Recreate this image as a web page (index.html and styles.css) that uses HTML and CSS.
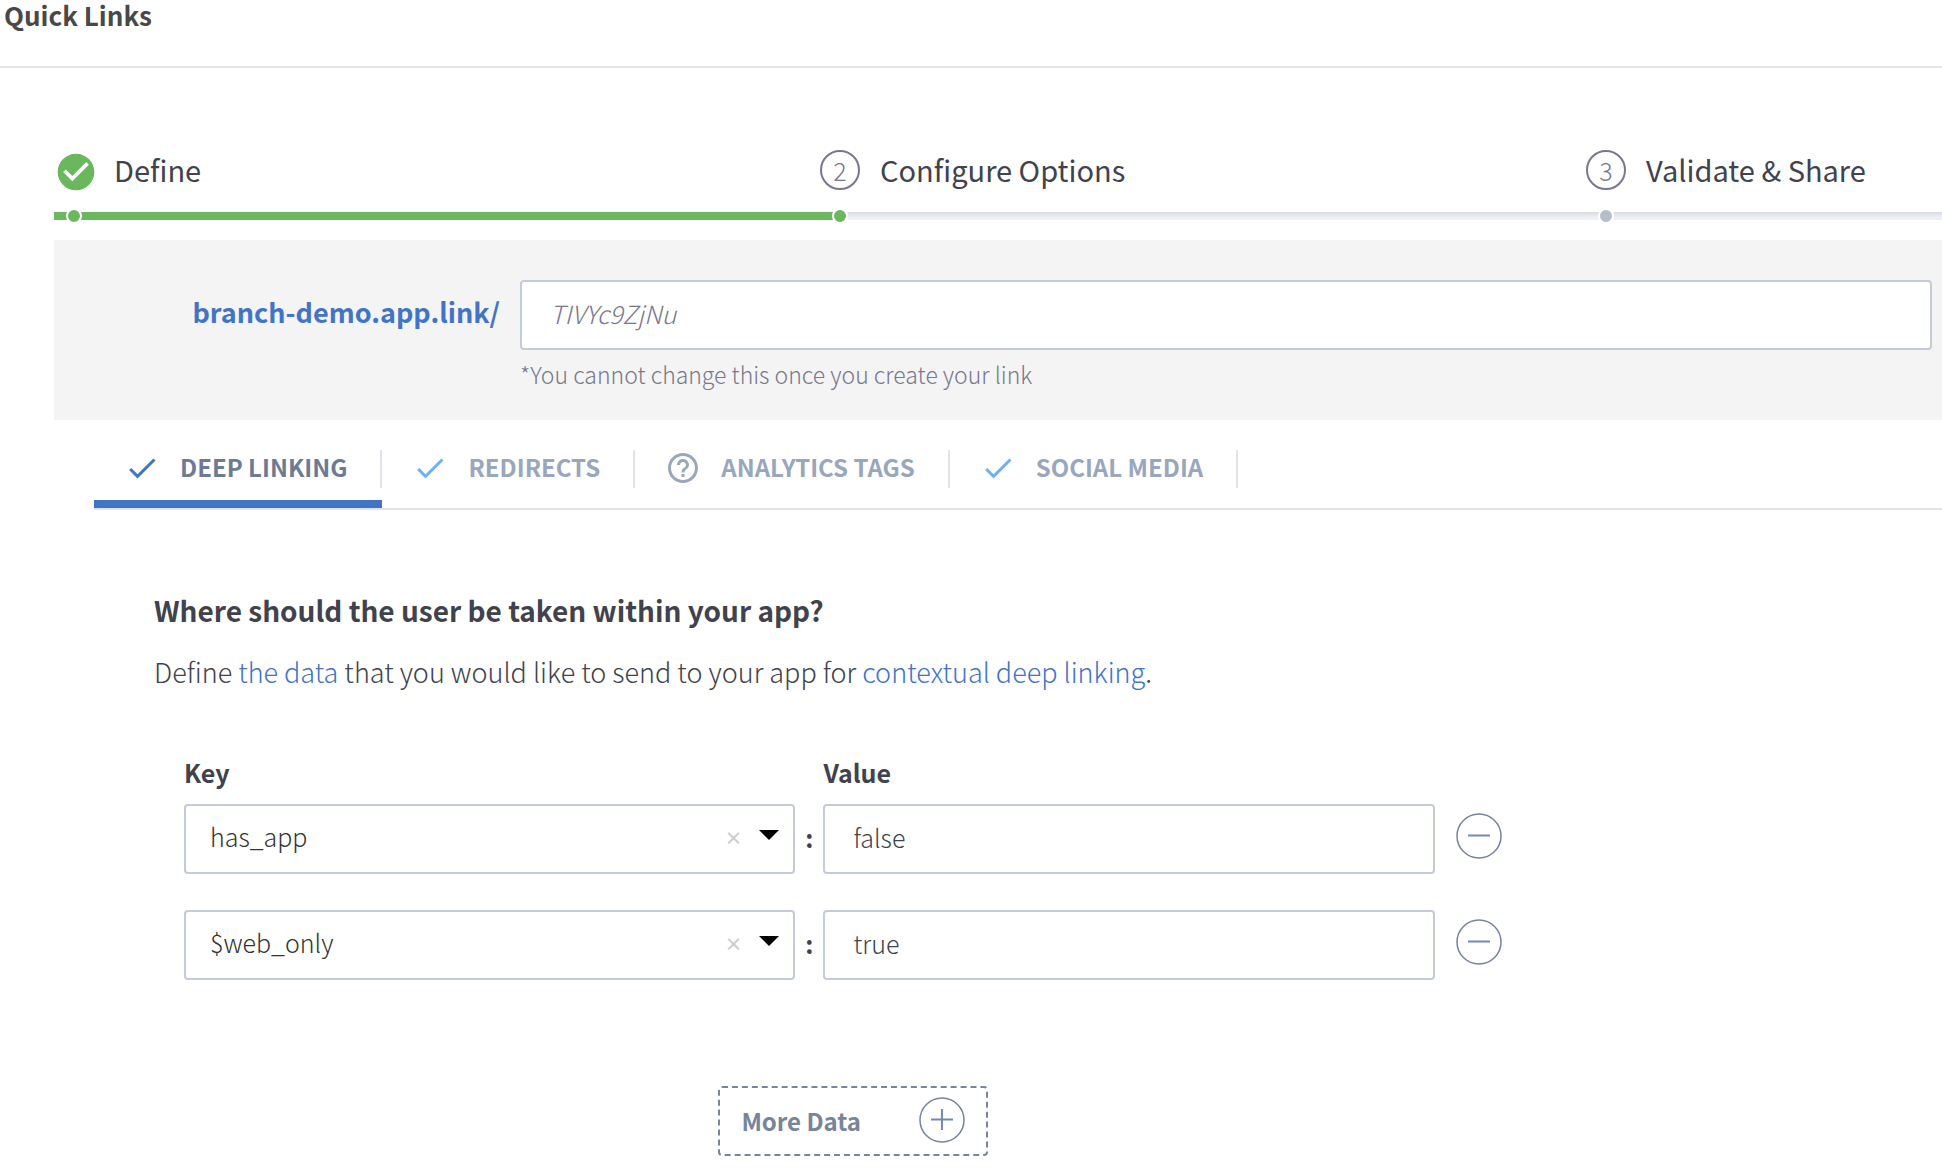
FILE: index.html
```html
<!DOCTYPE html>
<html lang="en">
<head>
  <meta charset="utf-8">
  <meta name="viewport" content="width=device-width, initial-scale=1">
  <title>Quick Links</title>
  <link rel="stylesheet" href="styles.css">
</head>
<body>
  <svg class="sprite" aria-hidden="true">
    <symbol id="check" viewBox="0 0 24 24"><path d="M9 16.17L4.83 12l-1.42 1.41L9 19 21 7l-1.41-1.41z"/></symbol>
    <symbol id="check-circle" viewBox="0 0 24 24"><path d="M12 2C6.48 2 2 6.48 2 12s4.48 10 10 10 10-4.48 10-10S17.52 2 12 2zm-2 15l-5-5 1.41-1.41L10 14.17l7.59-7.59L19 8l-9 9z"/></symbol>
    <symbol id="help" viewBox="0 0 24 24"><path d="M11 18h2v-2h-2v2zm1-16C6.48 2 2 6.48 2 12s4.48 10 10 10 10-4.48 10-10S17.52 2 12 2zm0 18c-4.41 0-8-3.59-8-8s3.59-8 8-8 8 3.59 8 8-3.59 8-8 8zm0-14c-2.21 0-4 1.79-4 4h2c0-1.1.9-2 2-2s2 .9 2 2c0 2-3 1.75-3 5h2c0-2.25 3-2.5 3-5 0-2.21-1.79-4-4-4z"/></symbol>
    <symbol id="minus-round" viewBox="0 0 46 46"><circle cx="23" cy="23" r="22" fill="none" stroke="#77849a" stroke-width="1.5"/><path d="M12 22.5h22" fill="none" stroke="#7188b8" stroke-width="2"/></symbol>
    <symbol id="plus-round" viewBox="0 0 46 46"><circle cx="23" cy="23" r="22" fill="none" stroke="#77849a" stroke-width="1.5"/><path d="M12 22.5h22M23 12v21" fill="none" stroke="#7188b8" stroke-width="2"/></symbol>
    <symbol id="caret" viewBox="0 0 20 10"><path d="M0 0h20L10 10z"/></symbol>
  </svg>

  <header class="page-header">
    <h1 class="page-title">Quick Links</h1>
  </header>

  <main class="page">
    <ol class="steps">
      <li class="step step-done">
        <div class="step-head"><svg class="step-check"><use href="#check-circle"/></svg><span>Define</span></div>
        <div class="step-track"><span class="step-dot"></span></div>
      </li>
      <li class="step step-current">
        <div class="step-head"><span class="step-number">2</span><span>Configure Options</span></div>
        <div class="step-track"><span class="step-dot"></span></div>
      </li>
      <li class="step">
        <div class="step-head"><span class="step-number">3</span><span>Validate &amp; Share</span></div>
        <div class="step-track"><span class="step-dot"></span></div>
      </li>
    </ol>

    <section class="link-panel">
      <label class="link-domain" for="alias">branch-demo.app.link/</label>
      <div class="link-field">
        <input class="field link-alias" id="alias" type="text" placeholder="TIVYc9ZjNu">
        <p class="link-hint">*You cannot change this once you create your link</p>
      </div>
    </section>

    <nav class="tabs">
      <button class="tab tab-active" type="button"><span class="tab-body"><svg class="tab-icon"><use href="#check"/></svg>DEEP LINKING</span></button>
      <button class="tab" type="button"><span class="tab-body"><svg class="tab-icon"><use href="#check"/></svg>REDIRECTS</span></button>
      <button class="tab" type="button"><span class="tab-body"><svg class="tab-icon tab-help"><use href="#help"/></svg>ANALYTICS TAGS</span></button>
      <button class="tab" type="button"><span class="tab-body"><svg class="tab-icon"><use href="#check"/></svg>SOCIAL MEDIA</span></button>
    </nav>

    <section class="content">
      <h2 class="content-title">Where should the user be taken within your app?</h2>
      <p class="content-text">Define <a href="#data">the data</a> that you would like to send to your app for <a href="#deep-linking">contextual deep linking</a>.</p>

      <form class="pairs">
        <div class="pair pair-labels">
          <label for="key-1">Key</label>
          <span></span>
          <label for="value-1">Value</label>
        </div>
        <div class="pair">
          <div class="key">
            <select class="field key-select" id="key-1"><option>has_app</option></select>
            <button class="key-clear" type="button" aria-label="Clear key">×</button>
            <svg class="key-caret"><use href="#caret"/></svg>
          </div>
          <span class="colon">:</span>
          <input class="field" id="value-1" type="text" value="false">
          <button class="round-button" type="button" aria-label="Remove row"><svg class="round-icon"><use href="#minus-round"/></svg></button>
        </div>
        <div class="pair">
          <div class="key">
            <select class="field key-select" aria-label="Key"><option>$web_only</option></select>
            <button class="key-clear" type="button" aria-label="Clear key">×</button>
            <svg class="key-caret"><use href="#caret"/></svg>
          </div>
          <span class="colon">:</span>
          <input class="field" type="text" aria-label="Value" value="true">
          <button class="round-button" type="button" aria-label="Remove row"><svg class="round-icon"><use href="#minus-round"/></svg></button>
        </div>
        <button class="more" type="button">More Data<svg class="round-icon"><use href="#plus-round"/></svg></button>
      </form>
    </section>
  </main>
</body>
</html>
```
FILE: styles.css
```css
* {
  box-sizing: border-box;
}

body {
  margin: 0;
  background: #fff;
  color: #40424d;
  font-family: "Noto Sans CJK SC", "Noto Sans", sans-serif;
  font-size: 25px;
}

h1, h2, p, ol {
  margin: 0;
  padding: 0;
}

button, input, select {
  font: inherit;
  color: inherit;
}

button {
  margin: 0;
  padding: 0;
  border: 0;
  background: none;
}

svg {
  display: block;
  flex: none;
  fill: currentColor;
}

a {
  color: #4173c7;
  text-decoration: none;
}

.sprite {
  display: none;
}

.page-header {
  height: 68px;
  padding-left: 4px;
  border-bottom: 2px solid #e1e6eb;
}

.page-title {
  color: #484848;
  font-size: 26px;
  line-height: 30px;
  font-weight: 700;
}

.page {
  padding: 82px 0 0 54px;
}

/* Wizard steps */

.steps {
  display: grid;
  grid-template-columns: 766fr 766fr 356fr;
  list-style: none;
}

.step-head {
  display: flex;
  align-items: flex-start;
  gap: 20px;
  height: 62px;
  font-size: 29px;
  line-height: 38px;
  white-space: nowrap;
}

.step-done .step-head {
  gap: 16px;
}

.step-check {
  width: 44px;
  height: 44px;
  color: #6ab75e;
}

.step-number {
  width: 40px;
  height: 40px;
  border: 2px solid #77788c;
  border-radius: 50%;
  color: #77788c;
  font-size: 25px;
  font-weight: 300;
  line-height: 36px;
  text-align: center;
}

.step-track {
  display: flex;
  align-items: center;
  height: 8px;
  padding-left: 12px;
  background: linear-gradient(#d9dce2, #eff0f5 70%);
}

.step-done .step-track {
  background: #6ab75e;
}

.step-current .step-track {
  background: linear-gradient(90deg, #6ab75e 20px, transparent 20px), linear-gradient(#d9dce2, #eff0f5 70%);
}

.step-dot {
  flex: none;
  width: 16px;
  height: 16px;
  border: 2px solid #fff;
  border-radius: 50%;
  background: #b5bfcc;
}

.step-done .step-dot,
.step-current .step-dot {
  background: #6ab75e;
}

/* Link alias */

.link-panel {
  display: flex;
  gap: 20px;
  margin-top: 20px;
  padding: 40px 10px 30px 0;
  background: #f4f4f4;
}

.link-domain {
  flex: none;
  width: 446px;
  color: #4173c7;
  font-size: 27px;
  font-weight: 700;
  line-height: 64px;
  text-align: right;
}

.link-field {
  flex: 1;
}

.link-hint {
  margin-top: 8px;
  color: #77788c;
  font-size: 23px;
  font-weight: 300;
  line-height: 32px;
}

.field {
  display: block;
  width: 100%;
  height: 70px;
  padding: 0 28px 4px;
  border: 2px solid #c4cad8;
  border-radius: 4px;
  background: #fff;
  font-weight: 300;
}

.link-alias::placeholder {
  color: #77788c;
  font-style: italic;
  opacity: 1;
}

/* Tabs */

.tabs {
  display: flex;
  height: 90px;
  margin-left: 40px;
  border-bottom: 2px solid #e0e4ea;
}

.tab {
  height: 88px;
  padding: 30px 0 12px;
  border-bottom: 8px solid transparent;
  color: #99a6bc;
  font-size: 24px;
  font-weight: 700;
  line-height: 34px;
}

.tab-active {
  border-bottom-color: #4173c7;
  color: #6c7b93;
}

.tab-body {
  display: flex;
  gap: 20px;
  height: 38px;
  padding: 0 33px 0 30px;
  border-right: 2px solid #e1e2ea;
  white-space: nowrap;
}

.tab-icon {
  width: 36px;
  height: 36px;
  color: #6cb0fa;
}

.tab-active .tab-icon {
  color: #4173c7;
}

.tab .tab-help {
  color: #99a6bc;
}

/* Deep linking data */

.content {
  padding: 80px 0 0 100px;
}

.content-title {
  font-size: 28px;
  font-weight: 700;
  line-height: 40px;
}

.content-text {
  margin-top: 22px;
  font-size: 27px;
  font-weight: 300;
  line-height: 40px;
}

.pairs {
  display: flex;
  flex-direction: column;
  width: 77%;
  margin-top: 64px;
  padding: 0 8px 0 30px;
}

.pair {
  display: grid;
  grid-template-columns: 1fr 28px 1fr 88px;
  align-items: center;
  margin-bottom: 36px;
}

.pair-labels {
  margin-bottom: 16px;
  font-weight: 700;
  line-height: 32px;
}

.key {
  position: relative;
}

.key-select {
  padding: 0 90px 6px 24px;
  appearance: none;
  color: #333;
}

.key-clear {
  position: absolute;
  top: 17px;
  right: 53px;
  width: 18px;
  color: #ccc;
  font-size: 18px;
  font-weight: 700;
  line-height: 32px;
}

.key-caret {
  position: absolute;
  top: 26px;
  right: 16px;
  width: 20px;
  height: 10px;
  color: #000;
  pointer-events: none;
}

.colon {
  padding-bottom: 4px;
  font-weight: 700;
  line-height: 64px;
  text-align: center;
}

.round-button {
  justify-self: start;
  margin: 0 0 6px 21px;
}

.round-icon {
  width: 46px;
  height: 46px;
}

.more {
  display: flex;
  align-items: center;
  justify-content: space-between;
  align-self: center;
  width: 270px;
  height: 70px;
  margin-top: 70px;
  padding: 0 21px 2px;
  border: 2px dashed #77849a;
  border-radius: 4px;
  color: #77849a;
  font-size: 24px;
  font-weight: 700;
}
```
